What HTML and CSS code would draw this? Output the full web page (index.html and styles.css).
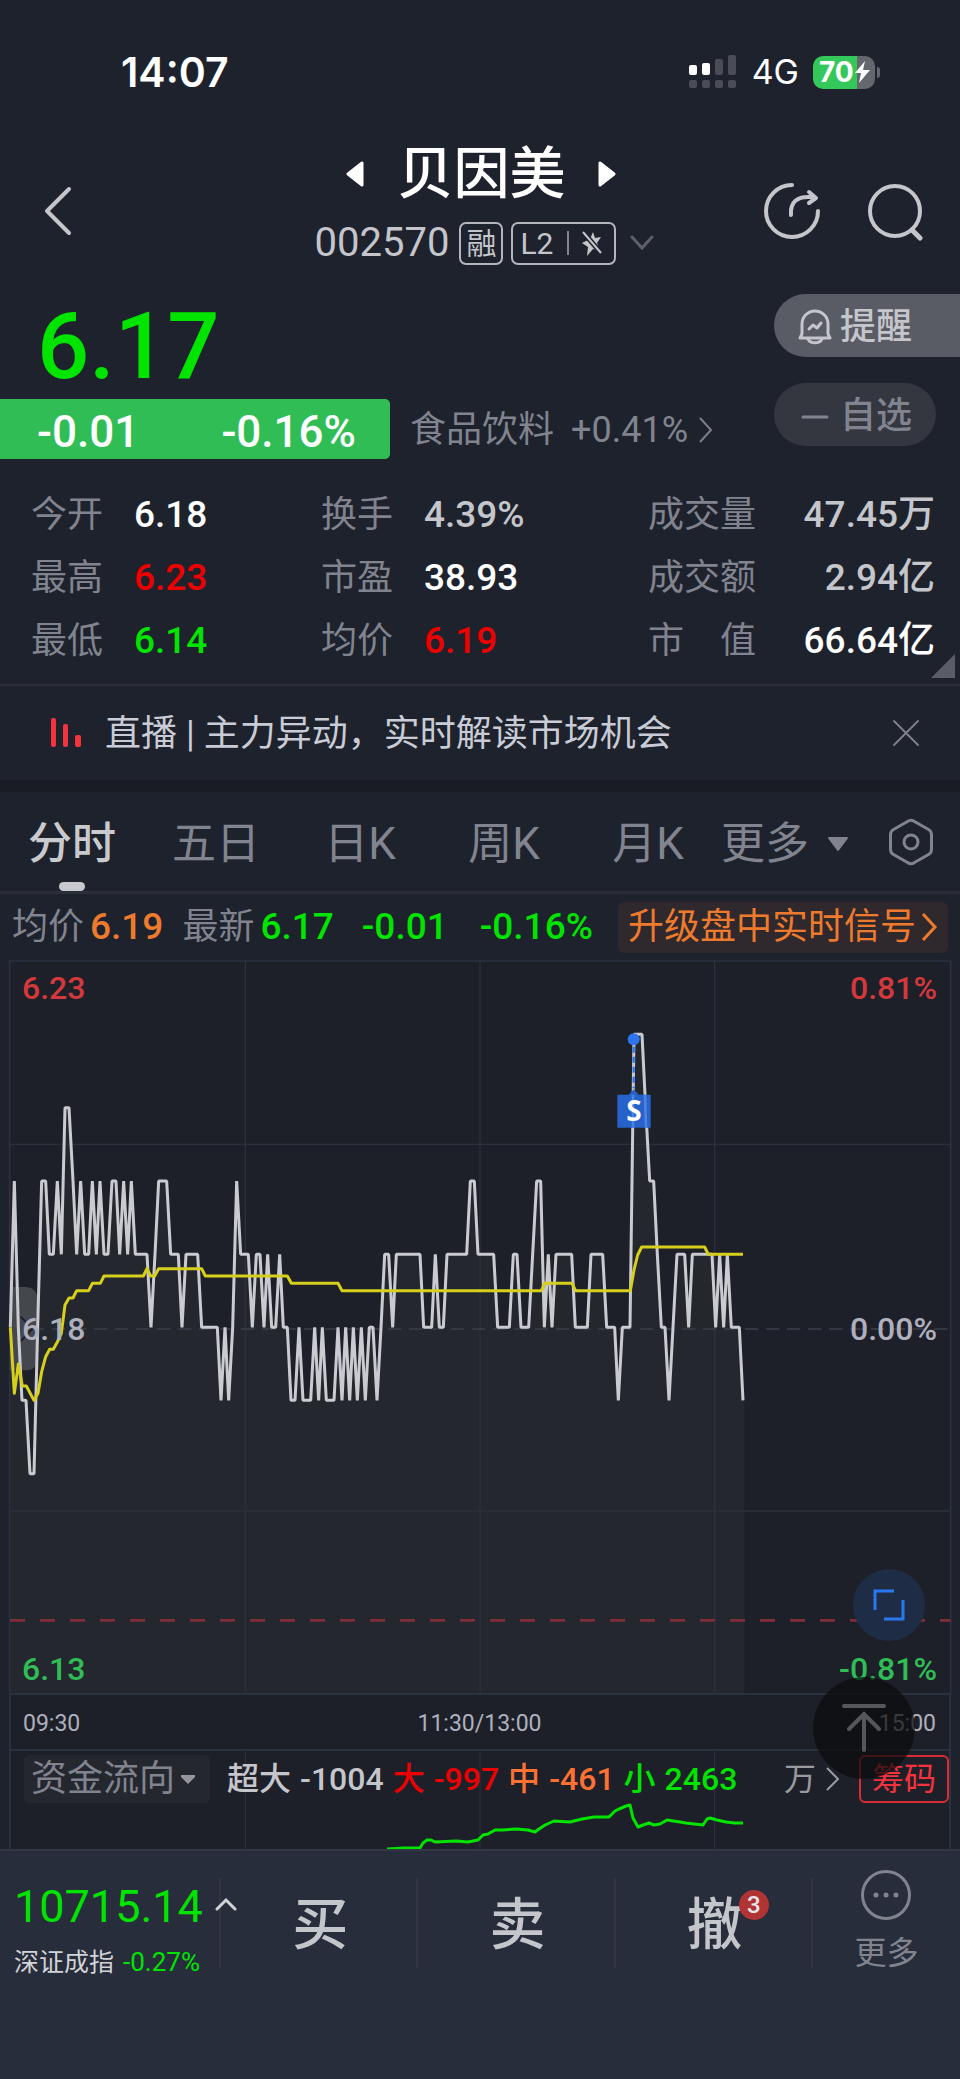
FILE: index.html
```html
<!DOCTYPE html>
<html lang="zh-CN">
<head>
<meta charset="utf-8">
<meta name="viewport" content="width=device-width, initial-scale=1">
<title>贝因美 002570</title>
<link rel="stylesheet" href="styles.css">
</head>
<body>
<div class="status">
  <span class="clock">14:07</span>
  <div class="status-right">
    <svg class="signal" width="48" height="34" viewBox="0 0 48 34" aria-hidden="true">
      <g fill="#fff"><rect x="0" y="10" width="8" height="10" rx="2"/><rect x="13" y="8" width="8" height="12" rx="2"/></g>
      <g fill="#4a4c58"><rect x="26" y="4" width="8" height="16" rx="2"/><rect x="39" y="0" width="8" height="20" rx="2"/>
      <rect x="0" y="25" width="8" height="8" rx="2"/><rect x="13" y="25" width="8" height="8" rx="2"/><rect x="26" y="25" width="8" height="8" rx="2"/><rect x="39" y="25" width="8" height="8" rx="2"/></g>
    </svg>
    <span class="network">4G</span>
    <div class="battery">
      <span class="battery-level">70</span>
      <svg width="15" height="22" viewBox="0 0 15 22" aria-hidden="true"><path d="M10 0 0 12h6L4 22 15 9H8z" fill="#fff"/></svg>
    </div>
  </div>
</div>

<header class="header">
  <button class="icon-btn" aria-label="返回"><svg width="32" height="52" viewBox="0 0 32 52"><path d="M28 4 6 26l22 22" fill="none" stroke="#c5c6cb" stroke-width="4" stroke-linecap="round" stroke-linejoin="round"/></svg></button>
  <div class="title-block">
    <div class="title-row">
      <button class="icon-btn" aria-label="上一只"><svg width="18" height="26" viewBox="0 0 18 26"><path d="M16 2v22L2 13z" fill="#fff" stroke="#fff" stroke-width="3" stroke-linejoin="round"/></svg></button>
      <h1>贝因美</h1>
      <button class="icon-btn" aria-label="下一只"><svg width="18" height="26" viewBox="0 0 18 26"><path d="M2 2v22l14-11z" fill="#fff" stroke="#fff" stroke-width="3" stroke-linejoin="round"/></svg></button>
    </div>
    <div class="code-row">
      <span class="code">002570</span>
      <span class="tag">融</span>
      <span class="tag tag-l2">L2<i></i><svg width="20" height="26" viewBox="0 0 20 26" aria-hidden="true"><path d="M11 2 8 9l-8 4 6 4-1 9 6-7 7 2-3-8 4-6-6 1z" fill="#c5c6cb"/><path d="m1 2 18 21" stroke="#1e222d" stroke-width="5"/><path d="m1 2 18 21" stroke="#c5c6cb" stroke-width="2"/></svg></span>
      <svg class="code-more" width="24" height="16" viewBox="0 0 24 16" aria-hidden="true"><path d="m2 2 10 11L22 2" fill="none" stroke="#5d606b" stroke-width="3" stroke-linecap="round"/></svg>
    </div>
  </div>
  <div class="header-actions">
    <button class="icon-btn" aria-label="分享"><svg width="58" height="60" viewBox="0 0 58 60" fill="none" stroke="#c5c6cb" stroke-width="4" stroke-linecap="round" stroke-linejoin="round"><path d="M29 4a26 26 0 1 0 26 26"/><path d="M28 34c-1-13 6-19 20-18"/><path d="m46 11 7 6-7 5"/></svg></button>
    <button class="icon-btn" aria-label="搜索"><svg width="58" height="60" viewBox="0 0 58 60" fill="none" stroke="#c5c6cb" stroke-linecap="round"><circle cx="29" cy="30" r="25" stroke-width="4"/><path d="m46 49 8 8" stroke-width="5"/></svg></button>
  </div>
</header>

<section class="quote">
  <div class="quote-top">
    <div class="price-block">
      <div class="price">6.17</div>
      <div class="change-row">
        <div class="change"><span>-0.01</span><span>-0.16%</span></div>
        <a class="sector" href="#"><span>食品饮料</span><span class="sector-pct">+0.41%</span><svg width="16" height="28" viewBox="0 0 16 28" aria-hidden="true"><path d="m2 2 11 12L2 26" fill="none" stroke="#7c7f8a" stroke-width="2"/></svg></a>
      </div>
    </div>
    <div class="quote-actions">
      <button class="pill pill-alert"><svg width="34" height="36" viewBox="0 0 34 36" fill="none" stroke="#c5c6cb" stroke-width="3" stroke-linecap="round" stroke-linejoin="round" aria-hidden="true"><path d="M4 25V15a13 13 0 0 1 26 0v10l2 4H2z"/><path d="M10 30c2 5 12 5 14 0"/><path d="m11 20 4-4 4 3 4-5"/></svg>提醒</button>
      <button class="pill pill-fav"><svg width="34" height="36" viewBox="0 0 34 36" aria-hidden="true"><path d="M5 19h24" stroke="#81848f" stroke-width="3" stroke-linecap="round"/></svg>自选</button>
    </div>
  </div>
  <dl class="stats">
    <div class="stat"><dt>今开</dt><dd class="white">6.18</dd></div>
    <div class="stat"><dt>换手</dt><dd>4.39%</dd></div>
    <div class="stat stat-wide"><dt>成交量</dt><dd>47.45万</dd></div>
    <div class="stat"><dt>最高</dt><dd class="up">6.23</dd></div>
    <div class="stat"><dt>市盈</dt><dd class="white">38.93</dd></div>
    <div class="stat stat-wide"><dt>成交额</dt><dd>2.94亿</dd></div>
    <div class="stat"><dt>最低</dt><dd class="down">6.14</dd></div>
    <div class="stat"><dt>均价</dt><dd class="up">6.19</dd></div>
    <div class="stat stat-wide"><dt>市　值</dt><dd class="white">66.64亿</dd></div>
  </dl>
  <svg class="corner" width="24" height="24" viewBox="0 0 24 24" aria-hidden="true"><path d="M24 0v24H0z" fill="#5a5c66"/></svg>
</section>

<section class="notice">
  <svg width="30" height="30" viewBox="0 0 30 30" aria-hidden="true"><g fill="#f5333f"><rect x="0" y="0" width="5" height="29" rx="2"/><rect x="12" y="6" width="5" height="23" rx="2"/><rect x="24" y="17" width="6" height="12" rx="2"/></g></svg>
  <a href="#">直播 | 主力异动，实时解读市场机会</a>
  <button class="icon-btn" aria-label="关闭"><svg width="28" height="28" viewBox="0 0 28 28"><path d="m2 2 24 24M26 2 2 26" stroke="#7c7f8a" stroke-width="2" stroke-linecap="round"/></svg></button>
</section>

<nav class="tabs">
  <button class="tab active">分时</button>
  <button class="tab">五日</button>
  <button class="tab">日K</button>
  <button class="tab">周K</button>
  <button class="tab">月K</button>
  <button class="tab tab-more">更多<svg width="22" height="16" viewBox="0 0 22 16" aria-hidden="true"><path d="M2 2h18l-9 12z" fill="#81848f" stroke="#81848f" stroke-width="2" stroke-linejoin="round"/></svg></button>
  <button class="icon-btn tab-set" aria-label="设置"><svg width="46" height="48" viewBox="0 0 46 48" fill="none" stroke="#81848f" stroke-width="3" stroke-linejoin="round"><path d="M19.500 3.500Q23 1 26.500 3.500L40.500 11.500Q43.500 13 43.500 17v14q0 4-3 5.500L26.500 44.500Q23 47 19.500 44.500L5.500 36.500Q2.500 35 2.500 31V17q0-4 3-5.500z"/><circle cx="23" cy="24" r="7"/></svg></button>
</nav>

<div class="ticker">
  <span>均价</span><b class="orange">6.19</b>
  <span class="ticker-last">最新</span><b class="down">6.17</b>
  <b class="down ticker-chg">-0.01</b><b class="down ticker-pct">-0.16%</b>
  <a class="upgrade" href="#">升级盘中实时信号<svg width="18" height="28" viewBox="0 0 18 28" aria-hidden="true"><path d="m3 1 12 13L3 27" fill="none" stroke="#ee7b2d" stroke-width="3"/></svg></a>
</div>

<main class="charts">
  <div class="price-chart">
    <!-- 3 units per pixel; one minute is 11.7 units wide, 0.01 yuan is 220 units high -->
    <svg class="plot" viewBox="0 -180 2880 2199" preserveAspectRatio="none" role="img" aria-label="分时走势">
      <rect x="30" y="-177" width="2822" height="2196" fill="#1e2029"/>
      <path d="M31 922 43 483 55 922 66 1141 78 1141 90 1361 102 1361 113 922 125 483 137 483 148 703 160 703 172 483 184 703 195 263 207 263 219 483 230 703 242 483 254 703 266 703 277 483 289 703 300 483 312 703 324 703 336 483 348 483 359 703 371 483 383 703 394 483 406 703 441 703 453 922 465 703 476 483 500 483 512 703 535 703 546 922 558 703 593 703 605 922 652 922 663 1141 675 922 686 1141 698 922 710 483 722 703 745 703 757 922 769 703 780 703 792 922 803 703 815 922 827 922 839 703 850 922 862 922 873 1141 885 1141 897 922 909 1141 932 1141 944 922 956 1141 967 922 979 1141 1002 1141 1014 922 1026 1141 1037 922 1049 1141 1060 922 1072 1141 1084 922 1096 1141 1108 922 1119 922 1131 1141 1143 922 1154 703 1166 703 1178 922 1189 703 1260 703 1271 922 1295 922 1306 703 1318 922 1330 922 1341 703 1400 703 1411 483 1423 483 1434 703 1481 703 1493 922 1528 922 1540 703 1551 703 1563 922 1586 922 1598 703 1610 483 1622 483 1633 922 1645 703 1656 922 1668 703 1715 703 1726 922 1762 922 1773 703 1808 703 1820 922 1844 922 1855 1141 1867 922 1890 922 1902 43 1926 43 1937 263 1949 483 1961 483 1972 703 1984 922 1995 922 2007 1141 2019 922 2031 703 2054 703 2066 922 2077 703 2136 703 2147 922 2159 703 2171 922 2182 703 2194 922 2218 922 2229 1141 2233 1141V2019H31z" fill="#25272f"/>
      <g stroke="#2d303a" stroke-width="4" fill="none">
        <path d="M736-177V2019M1440-177V2019M2144-177V2019M30 373H2852M30 1473H2852"/>
        <path d="M29-177V2019M2852-177V2019M27-177H2854" stroke="#2a3140" stroke-width="5"/>
      </g>
      <path d="M30 927H2852" stroke="#3b3f4a" stroke-width="5" stroke-dasharray="40 23" fill="none"/>
      <path d="M30 1801H2852" stroke="#7f2e38" stroke-width="8" stroke-dasharray="45 45" fill="none"/>
      <path d="M30 801h44q38 0 38 38v174q0 38-38 38H30z" fill="#45474f"/>
      <path d="m62 890 35 36-35 38" fill="none" stroke="#1e2029" stroke-width="6"/>
      <path d="M31 922 43 483 55 922 66 1141 78 1141 90 1361 102 1361 113 922 125 483 137 483 148 703 160 703 172 483 184 703 195 263 207 263 219 483 230 703 242 483 254 703 266 703 277 483 289 703 300 483 312 703 324 703 336 483 348 483 359 703 371 483 383 703 394 483 406 703 441 703 453 922 465 703 476 483 500 483 512 703 535 703 546 922 558 703 593 703 605 922 652 922 663 1141 675 922 686 1141 698 922 710 483 722 703 745 703 757 922 769 703 780 703 792 922 803 703 815 922 827 922 839 703 850 922 862 922 873 1141 885 1141 897 922 909 1141 932 1141 944 922 956 1141 967 922 979 1141 1002 1141 1014 922 1026 1141 1037 922 1049 1141 1060 922 1072 1141 1084 922 1096 1141 1108 922 1119 922 1131 1141 1143 922 1154 703 1166 703 1178 922 1189 703 1260 703 1271 922 1295 922 1306 703 1318 922 1330 922 1341 703 1400 703 1411 483 1423 483 1434 703 1481 703 1493 922 1528 922 1540 703 1551 703 1563 922 1586 922 1598 703 1610 483 1622 483 1633 922 1645 703 1656 922 1668 703 1715 703 1726 922 1762 922 1773 703 1808 703 1820 922 1844 922 1855 1141 1867 922 1890 922 1902 43 1926 43 1937 263 1949 483 1961 483 1972 703 1984 922 1995 922 2007 1141 2019 922 2031 703 2054 703 2066 922 2077 703 2136 703 2147 922 2159 703 2171 922 2182 703 2194 922 2218 922 2229 1141" fill="none" stroke="#cacbd0" stroke-width="9" stroke-linejoin="bevel"/>
      <path d="M31 922 43 1120 55 1032 67 1098 79 1098 102 1141 114 1120 125 1055 137 1010 149 988 160 988 172 966 184 940 195 855 207 834 219 834 230 812 266 812 277 790 301 790 312 768 430 768 441 746 452 768 464 768 476 746 605 746 616 768 862 768 874 790 1014 790 1026 812 1624 812 1634 790 1716 790 1727 812 1891 812 1902 750 1913 705 1925 681 2114 681 2125 703 2229 703" fill="none" stroke="#d6cf1c" stroke-width="9" stroke-linejoin="round"/>
      <path d="M1901 80V205" stroke="#2d75ea" stroke-width="7" stroke-dasharray="18 12"/>
      <circle cx="1901" cy="58" r="18" fill="#2d75ea"/>
      <path d="M1852 224h34l15-16 15 16h36v99h-100z" fill="#2762ca"/>
      <path d="M1899 224v99M1935 224l3 99" stroke="#4a83e0" stroke-width="8"/>
      <text class="sell" x="1902" y="304" text-anchor="middle">S</text>
    </svg>
    <span class="lbl lbl-tl">6.23</span><span class="lbl lbl-tr">0.81%</span>
    <span class="lbl lbl-ml">6.18</span><span class="lbl lbl-mr">0.00%</span>
    <span class="lbl lbl-bl">6.13</span><span class="lbl lbl-br">-0.81%</span>
    <button class="expand" aria-label="全屏"><svg width="34" height="34" viewBox="0 0 34 34" fill="none" stroke="#2a78f0" stroke-width="3"><path d="M3 22V3h19M31 12v19H12"/></svg></button>
  </div>
  <div class="axis"><span>09:30</span><span>11:30/13:00</span><span>15:00</span></div>
  <div class="flow">
    <svg class="flow-plot" viewBox="0 1751 960 98" preserveAspectRatio="none" aria-hidden="true">
      <path d="M245.500 1751v98M480 1751v98M714.500 1751v98" stroke="#2d303a"/>
      <path d="M387 1849 404 1848 420 1848 423 1843 427 1840 431 1840 435 1842 456 1841 468 1842 478 1840 483 1835 488 1834 495 1830 502 1830 516 1829 528 1830 535 1832 539 1829 545 1825 554 1821 570 1822 582 1819 594 1817 609 1817 615 1811 619 1809 626 1806 630 1805 633 1818 638 1827 643 1825 649 1823 654 1825 660 1824 667 1820 680 1822 686 1823 703 1825 707 1819 710 1818 717 1820 726 1822 735 1823 743 1823" fill="none" stroke="#00e400" stroke-width="3" stroke-linejoin="round"/>
    </svg>
    <div class="flow-row">
      <button class="flow-pick">资金流向<svg width="14" height="9" viewBox="0 0 14 9" aria-hidden="true"><path d="M0 0h14v2L7 9 0 2z" fill="#95969c"/></svg></button>
      <div class="flow-vals"><span>超大</span><span>-1004</span><span class="up">大</span><span class="up">-997</span><span class="mid">中</span><span class="mid">-461</span><span class="down">小</span><span class="down">2463</span></div>
      <a class="unit" href="#">万<svg width="15" height="26" viewBox="0 0 15 26" aria-hidden="true"><path d="m2 2 11 11L2 24" fill="none" stroke="#999a9e" stroke-width="2"/></svg></a>
      <button class="chips">筹码</button>
    </div>
  </div>
  <button class="to-top" aria-label="回到顶部"><svg width="46" height="50" viewBox="0 0 46 50" fill="none" stroke="#56575b" stroke-width="4" stroke-linecap="round"><path d="M3 3h40M23 47V11M8 26l15-15 15 15"/></svg></button>
</main>

<footer class="bottom">
  <a class="index" href="#">
    <span class="index-value">10715.14</span>
    <svg class="index-caret" width="22" height="14" viewBox="0 0 22 14" aria-hidden="true"><path d="M2 12 11 3l9 9" fill="none" stroke="#d2d3d7" stroke-width="3" stroke-linecap="round"/></svg>
    <span class="index-name">深证成指<b>-0.27%</b></span>
  </a>
  <button class="trade">买</button>
  <button class="trade">卖</button>
  <button class="trade"><span class="cancel">撤<span class="badge">3</span></span></button>
  <button class="more"><svg width="52" height="52" viewBox="0 0 52 52" aria-hidden="true"><circle cx="26" cy="26" r="23.500" fill="none" stroke="#81848f" stroke-width="3"/><g fill="#81848f"><circle cx="16" cy="26" r="2.500"/><circle cx="26" cy="26" r="2.500"/><circle cx="36" cy="26" r="2.500"/></g></svg>更多</button>
</footer>
</body>
</html>
```
FILE: styles.css
```css
* { box-sizing: border-box; }
body {
  margin: 0;
  background: #1e222d;
  color: #c5c6cb;
  font-family: Roboto, "Noto Sans CJK SC", sans-serif;
  font-size: 36px;
  line-height: 48px;
}
button {
  margin: 0;
  padding: 0;
  border: 0;
  background: none;
  color: inherit;
  font: inherit;
  cursor: pointer;
}
a { color: inherit; text-decoration: none; }
svg { display: block; flex: none; }
h1, dl, dd { margin: 0; }
.up { color: #ee0000; }
.down { color: #00e400; }
.mid { color: #ff7033; }
.orange { color: #ee7b2d; }
.white { color: #fff; }
.icon-btn { display: flex; align-items: center; justify-content: center; }

.status {
  display: flex;
  align-items: center;
  justify-content: space-between;
  height: 132px;
  padding: 12px 85px 0 121px;
  color: #fff;
  font-family: Inter, sans-serif;
}
.clock { font-size: 41px; font-weight: 600; }
.status-right { display: flex; align-items: center; }
.network { margin: 0 14px 0 15px; font-size: 34px; }
.battery {
  position: relative;
  display: flex;
  align-items: center;
  width: 62px;
  height: 33px;
  border-radius: 10px;
  background: linear-gradient(90deg, #34c759 44px, #65676f 44px);
}
.battery::after {
  content: "";
  position: absolute;
  left: 64px;
  top: 11px;
  width: 3px;
  height: 11px;
  border-radius: 0 4px 4px 0;
  background: #65676f;
}
.battery-level { width: 42px; padding-left: 6px; font-size: 28px; font-weight: 700; }

.header {
  display: grid;
  grid-template-columns: 1fr auto 1fr;
  align-items: start;
  height: 152px;
  padding: 0 36px 0 41px;
}
.header > .icon-btn { justify-self: start; padding-top: 53px; }
.title-block { display: flex; flex-direction: column; align-items: center; padding-top: 4px; }
.title-row { display: flex; align-items: center; gap: 33px; height: 76px; padding-right: 2px; }
h1 { color: #fff; font-size: 56px; font-weight: 500; line-height: 76px; }
.code-row { display: flex; align-items: center; height: 62px; padding-left: 4px; }
.code { margin-right: 10px; font-size: 40px; }
.tag {
  height: 43px;
  margin-right: 8px;
  padding: 0 5px;
  border: 2px solid #b4b5ba;
  border-radius: 7px;
  font-size: 30px;
  line-height: 39px;
}
.tag-l2 { display: flex; align-items: center; width: 105px; padding: 0 12px 0 7px; justify-content: space-between; }
.tag-l2 i { width: 2px; height: 24px; background: #85868d; }
.code-more { margin-left: 6px; }
.header-actions { display: flex; justify-self: end; gap: 45px; padding-top: 49px; }

.quote { position: relative; height: 402px; border-bottom: 2px solid #2b2e39; }
.quote-top { display: flex; justify-content: space-between; padding-top: 10px; }
.price { padding-left: 37px; color: #00e400; font-size: 92px; font-weight: 500; line-height: 105px; }
.change-row { display: flex; align-items: center; }
.change {
  display: flex;
  justify-content: space-between;
  width: 390px;
  height: 60px;
  padding: 0 34px 0 37px;
  border-radius: 0 5px 5px 0;
  background: #30bd55;
  color: #fff;
  font-size: 44px;
  font-weight: 500;
  line-height: 66px;
}
.sector { display: flex; align-items: center; margin-left: 20px; padding-top: 2px; color: #81848f; }
.sector-pct { margin: 0 10px 0 17px; }
.quote-actions { display: flex; flex-direction: column; width: 186px; gap: 26px; }
.pill {
  display: flex;
  align-items: center;
  gap: 8px;
  height: 63px;
  padding: 2px 0 0 24px;
  border-radius: 32px;
  font-weight: 500;
}
.pill-alert { border-radius: 32px 0 0 32px; background: #595b65; }
.pill-fav { width: 162px; background: #343740; color: #81848f; }
.stats {
  display: grid;
  grid-template-columns: 290px 327px 1fr;
  row-gap: 3px;
  padding: 26px 25px 0 31px;
}
.stat { display: flex; align-items: baseline; line-height: 60px; }
.stat dt { width: 103px; color: #81848f; }
.stat dd { font-size: 37px; font-weight: 500; }
.stat-wide { justify-content: space-between; }
.stat-wide dt { width: auto; }
.corner { position: absolute; right: 5px; bottom: 6px; }

.notice {
  display: flex;
  align-items: center;
  height: 106px;
  padding: 0 40px 0 51px;
  border-bottom: 12px solid #191b25;
}
.notice a { flex: 1; padding: 2px 0 0 24px; color: #c9ccd6; }

.tabs {
  display: grid;
  grid-template-columns: repeat(5, 15%) 1fr auto;
  height: 102px;
  border-bottom: 3px solid #2b2e39;
  color: #81848f;
  font-size: 44px;
}
.tab { position: relative; padding-top: 4px; }
.tab.active { color: #c9cace; font-weight: 500; }
.tab.active::after {
  content: "";
  position: absolute;
  left: 50%;
  bottom: 0;
  width: 26px;
  height: 9px;
  margin-left: -13px;
  border-radius: 5px;
  background: #c9cace;
}
.tab-more { display: flex; align-items: center; gap: 18px; padding-left: 1px; }
.tab-set { padding-right: 26px; }

.ticker { display: flex; align-items: center; height: 66px; padding: 0 12px; color: #81848f; }
.ticker b { font-size: 37px; font-weight: 500; margin-left: 6px; }
.ticker .ticker-last { margin-left: 19px; }
.ticker .ticker-chg { margin-left: 28px; }
.ticker .ticker-pct { margin-left: 32px; }
.upgrade {
  display: flex;
  align-items: center;
  gap: 4px;
  height: 51px;
  margin-left: auto;
  padding: 0 10px;
  border-radius: 6px;
  background: #2f282c;
  color: #ee7b2d;
}

.charts { position: relative; }
.price-chart { position: relative; }
.plot { width: 100%; height: 733px; }
.sell { fill: #fff; font: 700 84px "Open Sans", sans-serif; }
.lbl { position: absolute; font-size: 32px; font-weight: 500; line-height: 40px; }
.lbl-tl { left: 22px; top: 8px; color: #d3393c; }
.lbl-tr { right: 23px; top: 8px; color: #d3393c; }
.lbl-ml { left: 22px; top: 349px; color: #aeb1bd; }
.lbl-mr { right: 23px; top: 349px; color: #aeb1bd; }
.lbl-bl { left: 22px; bottom: 4px; color: #30bd55; }
.lbl-br { right: 23px; bottom: 4px; color: #30bd55; }
.expand {
  position: absolute;
  right: 35px;
  bottom: 52px;
  display: grid;
  place-items: center;
  width: 72px;
  height: 72px;
  border-radius: 50%;
  background: #1f2c45;
}
.axis {
  display: flex;
  align-items: center;
  justify-content: space-between;
  height: 58px;
  margin: 0 9px;
  padding: 3px 13px 0 12px;
  border: 2px solid #2a3140;
  background: #1e2029;
  color: #aeb1bd;
  font-size: 23px;
}
.flow {
  position: relative;
  height: 98px;
  margin: 0 9px;
  border: solid #2a3140;
  border-width: 0 2px;
  background: #1e2029;
}
.flow-plot { position: absolute; left: -11px; top: 0; width: calc(100% + 22px); height: 98px; }
.flow-row { position: relative; display: flex; align-items: center; padding: 4px 0 0 13px; white-space: nowrap; }
.flow-pick {
  display: flex;
  align-items: center;
  gap: 6px;
  height: 48px;
  padding: 0 15px 0 7px;
  border-radius: 6px;
  background: #25272f;
  color: #81848f;
}
.flow-vals { display: flex; align-items: baseline; gap: 9px; margin-left: 17px; font-size: 32px; font-weight: 500; }
.unit { display: flex; align-items: center; gap: 9px; margin-left: auto; color: #999a9e; font-size: 32px; }
.chips {
  width: 90px;
  height: 48px;
  margin-left: 19px;
  border: 2px solid #d62e36;
  border-radius: 6px;
  color: #f5333f;
  font-size: 32px;
  line-height: 40px;
}
.to-top {
  position: absolute;
  right: 45px;
  bottom: 70px;
  display: grid;
  place-items: center;
  width: 102px;
  height: 102px;
  border-radius: 50%;
  background: rgba(11, 11, 13, 0.72);
}

.bottom {
  display: grid;
  grid-template-columns: 221px 1fr 1fr 1fr 147px;
  align-items: start;
  height: 230px;
  padding-top: 27px;
  border-top: 2px solid #323744;
  background: #282d3b;
}
.index {
  position: relative;
  height: 90px;
  padding-left: 14px;
  border-right: 2px solid #323643;
}
.index-value { display: block; color: #00e400; font-size: 45px; line-height: 58px; }
.index-caret { position: absolute; left: 215px; top: 19px; }
.index-name { display: flex; align-items: baseline; gap: 9px; padding-top: 6px; color: #d2d3d7; font-size: 25px; line-height: 40px; white-space: nowrap; }
.index-name b { color: #00e400; font-size: 26px; font-weight: 400; }
.trade { height: 90px; padding-left: 3px; border-right: 2px solid #323643; font-size: 56px; font-weight: 500; line-height: 94px; }
.cancel { position: relative; }
.badge {
  position: absolute;
  left: 52px;
  top: -2px;
  width: 30px;
  height: 30px;
  border-radius: 50%;
  background: #b13434;
  color: #e6e6e8;
  font-size: 24px;
  line-height: 30px;
}
.more { display: flex; flex-direction: column; align-items: center; margin-top: -9px; gap: 8px; color: #81848f; font-size: 32px; }
```
